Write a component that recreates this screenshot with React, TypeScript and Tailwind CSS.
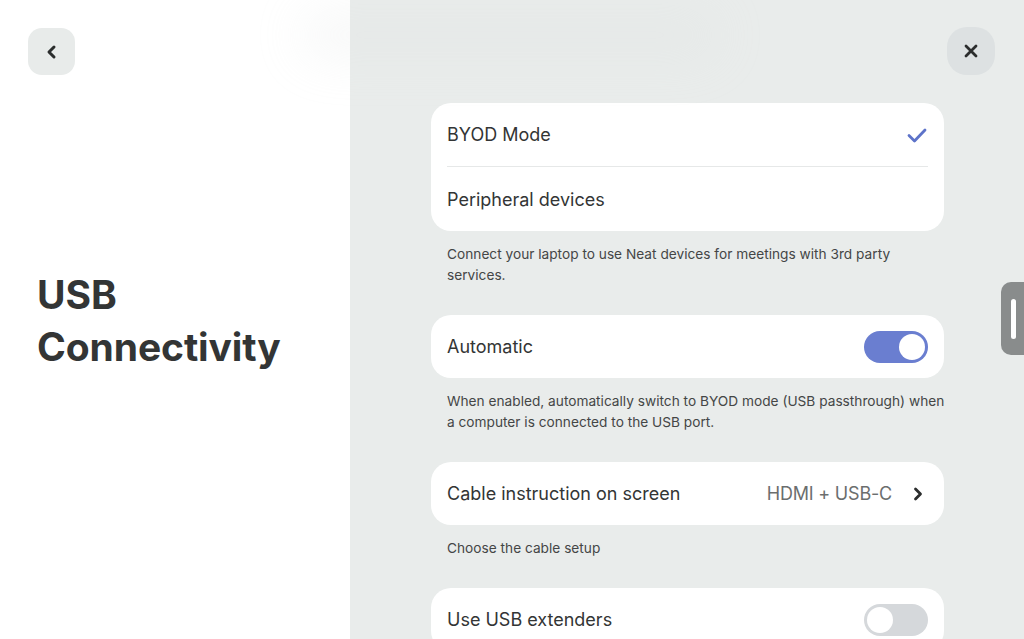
import React from "react";

function Toggle({ on }: { on: boolean }) {
  return (
    <div
      className={
        on
          ? "w-[64px] h-[32px] rounded-full bg-[#6a7ed0] flex items-center justify-end px-[3px]"
          : "w-[64px] h-[32px] rounded-full bg-[#d5d8db] flex items-center justify-start px-[3px]"
      }
    >
      <div className="w-[26px] h-[26px] rounded-full bg-white" />
    </div>
  );
}

function Desc({ children }: { children: React.ReactNode }) {
  return (
    <p className="mt-[13px] pl-4 whitespace-nowrap text-[13.7px] leading-[21px] text-[#444646]">{children}</p>
  );
}

export default function App() {
  return (
    <div
      className="relative flex w-[1024px] h-[639px] overflow-hidden text-[#333535]"
      style={{ fontFamily: "Inter, 'Noto Sans', sans-serif" }}
    >
      {/* left panel */}
      <div className="relative w-[350px] h-full bg-white flex flex-col">
        <div className="pt-[28px] pl-[28px]">
          <button className="w-[47px] h-[47px] rounded-[14px] bg-[#e8ebea] flex items-center justify-center">
            <svg width="16" height="16" viewBox="0 0 16 16" fill="none">
              <path d="M10 3 L5 8 L10 13" stroke="#2b2d2d" strokeWidth="3" strokeLinecap="round" strokeLinejoin="round" />
            </svg>
          </button>
        </div>
        <div className="flex-1 flex items-center pl-[37px] pb-[73px]">
          <h1 className="text-[39px] leading-[52px] font-bold tracking-[-0.1px] text-[#333535]">
            USB
            <br />
            Connectivity
          </h1>
        </div>
      </div>

      {/* right panel */}
      <div className="relative flex-1 h-full bg-[#e9eceb]">
        <div className="flex justify-end pt-[27px] pr-[29px]">
          <button className="w-[48px] h-[48px] rounded-[20px] bg-[#dde1e2] flex items-center justify-center">
            <svg width="16" height="16" viewBox="0 0 16 16" fill="none">
              <path d="M3 3 L13 13 M13 3 L3 13" stroke="#2b2d2d" strokeWidth="2.8" strokeLinecap="round" />
            </svg>
          </button>
        </div>

        <div className="ml-[81px] w-[513px] mt-[28px]">
          {/* card 1 */}
          <div className="bg-white rounded-[20px] px-4">
            <div className="h-[64px] flex items-center justify-between border-b border-[#e6e8e8]">
              <span className="text-[18px]">BYOD Mode</span>
              <svg width="22" height="22" viewBox="0 0 22 22" fill="none">
                <path d="M3 11.5 L8.5 17 L19 6" stroke="#5d73c9" strokeWidth="2.8" strokeLinecap="round" strokeLinejoin="round" />
              </svg>
            </div>
            <div className="h-[64px] flex items-center">
              <span className="text-[18px]">Peripheral devices</span>
            </div>
          </div>
          <Desc>
            Connect your laptop to use Neat devices for meetings with 3rd party
            <br />
            services.
          </Desc>

          {/* card 2 */}
          <div className="mt-[29px] bg-white rounded-[20px] px-4 h-[63px] flex items-center justify-between">
            <span className="text-[18px]">Automatic</span>
            <Toggle on />
          </div>
          <Desc>
            When enabled, automatically switch to BYOD mode (USB passthrough) when
            <br />
            a computer is connected to the USB port.
          </Desc>

          {/* card 3 */}
          <div className="mt-[29px] bg-white rounded-[20px] pl-4 pr-[20px] h-[63px] flex items-center justify-between">
            <span className="text-[18px]">Cable instruction on screen</span>
            <div className="flex items-center gap-[20px]">
              <span className="text-[18px] tracking-[-0.2px] text-[#6b6e6e]">HDMI + USB-C</span>
              <svg width="12" height="16" viewBox="0 0 12 16" fill="none">
                <path d="M3.5 3 L8.5 8 L3.5 13" stroke="#2b2d2d" strokeWidth="2.8" strokeLinecap="round" strokeLinejoin="round" />
              </svg>
            </div>
          </div>
          <Desc>Choose the cable setup</Desc>

          {/* card 4 */}
          <div className="mt-[29px] bg-white rounded-[20px] px-4 h-[63px] flex items-center justify-between">
            <span className="text-[18px]">Use USB extenders</span>
            <Toggle on={false} />
          </div>
        </div>

        {/* scroll handle */}
        <div className="absolute right-0 top-[282px] w-[23px] h-[73px] rounded-l-[10px] bg-[#898c8c] flex items-center pl-[10px]">
          <div className="w-[5px] h-[40px] rounded-full bg-white" />
        </div>
      </div>

      {/* blurred smudge at top */}
      <div className="absolute left-[300px] top-[10px] w-[420px] h-[50px] rounded-full bg-[#dadedd] opacity-20 blur-xl" />
    </div>
  );
}
